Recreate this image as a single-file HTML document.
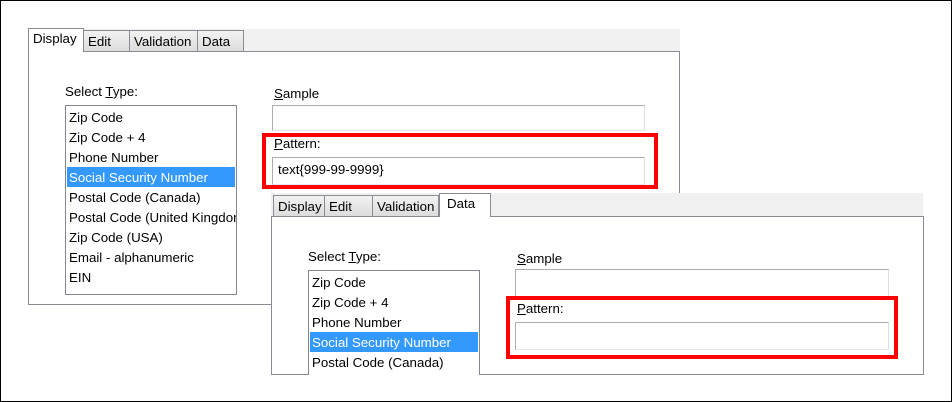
<!DOCTYPE html>
<html><head><style>
*{margin:0;padding:0;box-sizing:border-box}
body{width:952px;height:402px;position:relative;background:#fff;font-family:"Liberation Sans",sans-serif;font-size:13.3px;color:#000;overflow:hidden}
.a{position:absolute}
.frame{left:0;top:0;width:952px;height:402px;border:1px solid #000}
.panel{background:#fff;border:1px solid #898c95}
.strip{background:#f0f0f0}
.tab{position:absolute;border:1px solid #898c95;border-bottom:none;background:linear-gradient(#f2f2f2,#dcdcdc);padding:3px 0 0 4px;height:21px}
.tab.on{background:#fff;height:24px;padding-top:2px}
.list{background:#fff;border:1px solid #828790;overflow:hidden}
.list div{height:20px;line-height:21px;padding-left:3px;white-space:nowrap}
.list .sel{background:#3399ff;color:#fff;margin:0 1px;padding-left:2px}
.inp{background:#fff;border:1px solid #abadb3;border-bottom-color:#e3e9ef;border-right-color:#dbdfe6}
.red{border:4px solid #f00}
u{text-decoration:underline}
</style></head><body>
<div class="a frame"></div>

<!-- panel 1 -->
<div class="a strip" style="left:28px;top:29px;width:652px;height:23px"></div>
<div class="a panel" style="left:28px;top:51px;width:652px;height:254px"></div>
<div class="tab" style="left:83px;top:30px;width:47px">Edit</div>
<div class="tab" style="left:129px;top:30px;width:69px">Validation</div>
<div class="tab" style="left:197px;top:30px;width:47px">Data</div>
<div class="tab on" style="left:28px;top:28px;width:56px">Display</div>
<div class="a" style="left:65px;top:84px">Select <u>T</u>ype:</div>
<div class="a list" style="left:65px;top:105px;width:172px;height:190px;padding-top:1px">
<div>Zip Code</div><div>Zip Code + 4</div><div>Phone Number</div><div class="sel">Social Security Number</div><div>Postal Code (Canada)</div><div>Postal Code (United Kingdom)</div><div>Zip Code (USA)</div><div>Email - alphanumeric</div><div>EIN</div>
</div>
<div class="a" style="left:274px;top:86px"><u>S</u>ample</div>
<div class="a inp" style="left:272px;top:105px;width:373px;height:26px"></div>
<div class="a red" style="left:262px;top:133px;width:396px;height:56px"></div>
<div class="a" style="left:274px;top:136px"><u>P</u>attern:</div>
<div class="a inp" style="left:272px;top:157px;width:373px;height:28px;padding:4px 0 0 5px">text{999-99-9999}</div>

<!-- panel 2 -->
<div class="a" style="left:271px;top:193px;width:652px;height:182px;background:#fff"></div>
<div class="a strip" style="left:271px;top:193px;width:652px;height:24px"></div>
<div class="a panel" style="left:271px;top:216px;width:653px;height:159px"></div>
<div class="tab" style="left:273px;top:195px;width:52px">Display</div>
<div class="tab" style="left:324px;top:195px;width:49px">Edit</div>
<div class="tab" style="left:372px;top:195px;width:67px">Validation</div>
<div class="tab on" style="left:439px;top:193px;width:52px;padding-left:7px">Data</div>
<div class="a" style="left:308px;top:249px">Select <u>T</u>ype:</div>
<div class="a list" style="left:308px;top:270px;width:172px;height:105px;padding-top:1px;border-bottom:none">
<div>Zip Code</div><div>Zip Code + 4</div><div>Phone Number</div><div class="sel">Social Security Number</div><div>Postal Code (Canada)</div>
</div>
<div class="a" style="left:517px;top:251px"><u>S</u>ample</div>
<div class="a inp" style="left:515px;top:269px;width:374px;height:28px"></div>
<div class="a red" style="left:506px;top:296px;width:392px;height:63px"></div>
<div class="a" style="left:517px;top:301px"><u>P</u>attern:</div>
<div class="a inp" style="left:515px;top:322px;width:374px;height:28px"></div>
</body></html>
